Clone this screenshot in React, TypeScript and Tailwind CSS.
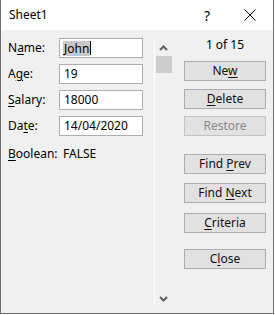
import React from 'react'

const font = { fontFamily: '"Noto Sans", "Segoe UI", Arial, sans-serif' }

// label with one underlined access key letter
const Mnemonic: React.FC<{ text: string; at: number }> = ({ text, at }) => (
  <span className="whitespace-pre">
    {text.slice(0, at)}
    <span className="underline underline-offset-2">{text[at]}</span>
    {text.slice(at + 1)}
  </span>
)

const fields = [
  { label: 'Name:', key: 1, value: 'John', selected: true },
  { label: 'Age:', key: 1, value: '19' },
  { label: 'Salary:', key: 0, value: '18000' },
  { label: 'Date:', key: 2, value: '14/04/2020' },
]

const FormButton: React.FC<{ text: string; at?: number; disabled?: boolean; className?: string }> = ({
  text,
  at,
  disabled,
  className = '',
}) => (
  <button
    className={`w-[82px] h-[20px] border text-[12px] leading-none flex items-center justify-center ${
      disabled ? 'bg-[#e1e1e1] border-[#c4c4c4] text-[#8a8a8a]' : 'bg-[#e1e1e1] border-[#adadad] text-[#111]'
    } ${className}`}
  >
    {at === undefined ? <span>{text}</span> : <Mnemonic text={text} at={at} />}
  </button>
)

const App: React.FC = () => {
  return (
    <div className="w-[275px] h-[315px] bg-white" style={font}>
      <div className="w-[274px] h-[314px] border-x border-b border-[#707070] bg-[#f0f0f0] flex flex-col">
        {/* Title bar */}
        <div className="h-[30px] bg-white flex items-center pl-[8px] shrink-0">
          <span className="text-[12px] text-black flex-1">Sheet1</span>
          <span className="text-[14px] text-black mr-[34px]">?</span>
          <svg width="12" height="12" viewBox="0 0 12 12" className="mr-[17px]">
            <path d="M0.5 0.5 L11.5 11.5 M11.5 0.5 L0.5 11.5" stroke="#000" strokeWidth="1" />
          </svg>
        </div>

        <div className="flex flex-1 pt-[8px] pb-[7px]">
          {/* Fields */}
          <div className="w-[153px] pl-[7px] flex flex-col gap-[6px] text-[12px] text-black">
            {fields.map((f) => (
              <div key={f.label} className="flex items-center h-[20px]">
                <span className="w-[51px]">
                  <Mnemonic text={f.label} at={f.key} />
                </span>
                <div className="w-[84px] h-[20px] bg-white border border-[#adadad] flex items-center pl-[3px]">
                  {f.selected ? (
                    <>
                      <span className="bg-[#c8c8c8] px-[1px] leading-[15px]">{f.value}</span>
                      <span className="w-px h-[14px] bg-black" />
                    </>
                  ) : (
                    <span className="pl-[1px]">{f.value}</span>
                  )}
                </div>
              </div>
            ))}
            <div className="flex items-center h-[20px] mt-[2px]">
              <span className="w-[55px]">
                <Mnemonic text="Boolean:" at={0} />
              </span>
              <span>FALSE</span>
            </div>
          </div>

          {/* Scrollbar */}
          <div className="w-[17px] border-l border-white flex flex-col items-center">
            <svg width="9" height="6" viewBox="0 0 9 6" className="mt-[7px]">
              <path d="M1 5 L4.5 1.5 L8 5" stroke="#606060" strokeWidth="2" fill="none" />
            </svg>
            <div className="w-[16px] h-[17px] bg-[#cdcdcd] mt-[5px] ml-[1px]" />
            <div className="flex-1" />
            <svg width="9" height="6" viewBox="0 0 9 6" className="mb-[4px]">
              <path d="M1 1 L4.5 4.5 L8 1" stroke="#606060" strokeWidth="2" fill="none" />
            </svg>
          </div>

          {/* Buttons */}
          <div className="flex-1 pl-[13px] flex flex-col">
            <div className="w-[82px] text-center text-[12px] text-black leading-[16px] mt-[-1px]">1 of 15</div>
            <FormButton text="New" at={2} className="mt-[8px]" />
            <FormButton text="Delete" at={0} className="mt-[8px]" />
            <FormButton text="Restore" disabled className="mt-[7px]" />
            <FormButton text="Find Prev" at={5} className="mt-[18px]" />
            <FormButton text="Find Next" at={5} className="mt-[9px]" />
            <FormButton text="Criteria" at={0} className="mt-[10px]" />
            <FormButton text="Close" at={1} className="mt-[16px]" />
          </div>
        </div>
      </div>
    </div>
  )
}

export default App
